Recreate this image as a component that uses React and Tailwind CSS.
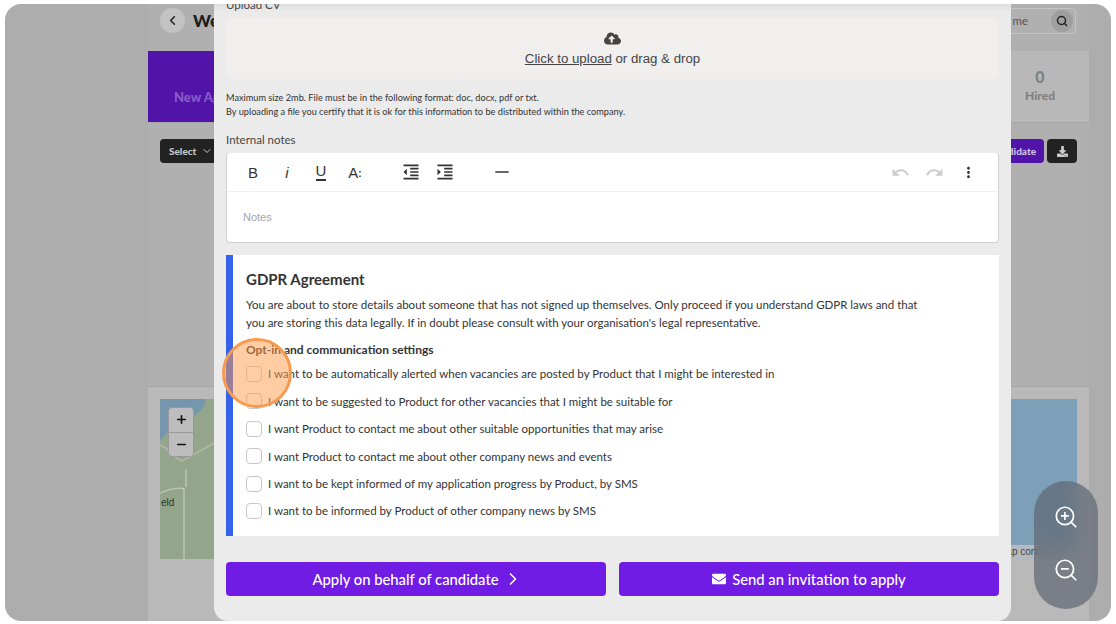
import React from "react";
import { ChevronLeft, ChevronRight, ChevronDown, Search, ZoomIn, ZoomOut, Plus, Minus } from "lucide-react";
import { MdFormatIndentDecrease, MdFormatIndentIncrease, MdHorizontalRule, MdUndo, MdRedo, MdMoreVert } from "react-icons/md";
import { FaCloudUploadAlt, FaEnvelope, FaDownload } from "react-icons/fa";

const options = [
  "I want to be automatically alerted when vacancies are posted by Product that I might be interested in",
  "I want to be suggested to Product for other vacancies that I might be suitable for",
  "I want Product to contact me about other suitable opportunities that may arise",
  "I want Product to contact me about other company news and events",
  "I want to be kept informed of my application progress by Product, by SMS",
  "I want to be informed by Product of other company news by SMS",
];

function Background() {
  return (
    <div className="h-full ml-[143px] w-[941px] bg-[#b0b0b0] flex flex-col">
      <div className="h-[47px] flex items-start justify-between pl-[12px] pr-[13px] pt-[4px]">
        <div className="flex items-center gap-[8px]">
          <div className="w-[25px] h-[25px] rounded-full bg-[#c2c2c2] flex items-center justify-center">
            <ChevronLeft size={15} strokeWidth={2.5} className="text-[#222]" />
          </div>
          <span className="text-[17px] font-black text-[#1c1c1c]">Welcome</span>
        </div>
        <div className="w-[170px] h-[26px] rounded border border-[#c4c4c4] flex items-center justify-end pr-[2px] text-[11.5px] text-[#555]">
          <span className="mr-[23px]">me</span>
          <div className="w-[22px] h-[22px] rounded-full bg-[#9f9f9f] flex items-center justify-center">
            <Search size={12} strokeWidth={3} className="text-[#222]" />
          </div>
        </div>
      </div>
      <div className="h-[72px] flex bg-[#b8b8b8] border-b border-[#a8a8a8]">
        <div className="w-[120px] bg-[#5113a8] flex items-center pl-[26px] pt-[23px]">
          <span className="text-[13px] font-black text-[#8a5cc9] whitespace-nowrap">New Applicants</span>
        </div>
        <div className="flex-1" />
        <div className="w-[98px] flex flex-col items-center justify-center pb-[2px] text-[#808080] font-black">
          <span className="text-[16px] leading-[20px]">0</span>
          <span className="text-[12px] leading-[17px]">Hired</span>
        </div>
      </div>
      <div className="h-[24px] mt-[16px] px-[12px] flex justify-between">
        <div className="h-[24px] w-[70px] rounded-sm bg-[#222] text-[#c8c8c8] text-[10px] font-black flex items-center gap-[5px] pl-[9px]">
          Select <ChevronDown size={12} />
        </div>
        <div className="flex gap-[3px]">
          <div className="h-[24px] w-[70px] rounded-sm bg-[#5113a8] text-[#d0c0e8] text-[10px] font-black flex items-center justify-end pr-[8px]">
            candidate
          </div>
          <div className="h-[24px] w-[30px] rounded-sm bg-[#222] flex items-center justify-center">
            <FaDownload size={11} className="text-[#ccc]" />
          </div>
        </div>
      </div>
      <div className="mt-[223px] flex-1 bg-[#b9b9b9] border-t border-[#a6a6a6] px-[12px] pt-[12px]">
        <div className="relative h-[160px] overflow-hidden bg-[#7d9fb7]">
          <svg className="absolute left-0 top-0" width="54" height="160" viewBox="0 0 54 160">
            <rect width="54" height="160" fill="#93a68c" />
            <path d="M0 0H46C44 14 30 20 18 24C10 28 6 36 0 42Z" fill="#7597ad" />
            <path d="M0 46C8 48 14 60 22 62L54 44" stroke="#adb6a3" strokeWidth="2" fill="none" />
            <path d="M0 94C8 90 20 88 24 90V160M26 70V88" stroke="#bcc3b2" strokeWidth="1.5" fill="none" />
          </svg>
          <div className="absolute left-[8px] top-[8px] w-[26px] h-[50px] rounded-sm bg-[#bdbdbd] border border-[#999] flex flex-col text-[#111]">
            <div className="h-[25px] flex items-center justify-center border-b border-[#999]"><Plus size={13} strokeWidth={3} /></div>
            <div className="h-[24px] flex items-center justify-center"><Minus size={13} strokeWidth={3} /></div>
          </div>
          <span className="absolute left-[1px] top-[96px] text-[10px] text-[#2f352c] font-['Liberation_Sans',sans-serif]">eld</span>
          <div className="absolute right-0 bottom-0 w-[80px] h-[14px] bg-[#b5babe] pl-[1px] text-[10px] leading-[14px] text-[#444] whitespace-nowrap overflow-hidden font-['Liberation_Sans',sans-serif]">Map contributors</div>
        </div>
      </div>
    </div>
  );
}

function ToolIcon({ children, className = "" }) {
  return <span className={`w-[34px] flex items-center justify-center ${className}`}>{children}</span>;
}

function Modal() {
  return (
    <div className="absolute left-[209px] top-0 bottom-0 w-[797px] bg-[#ebebeb] rounded-b-[14px] overflow-hidden px-[12px] text-[#333]">
      <div className="absolute inset-x-0 top-0 h-[8px] bg-gradient-to-b from-[#dfdfdf] to-[#ebebeb]" />
      <div className="relative text-[11.5px] leading-[14px] -mt-[6px] h-[20px] text-[#444]">Upload CV</div>
      <div className="h-[61px] rounded-lg bg-[#f0efee] flex flex-col items-center justify-center text-[#444] font-['Liberation_Sans',sans-serif]">
        <FaCloudUploadAlt size={17} className="text-[#444] -mt-[3px] mb-[3px] translate-y-[1px]" />
        <div className="text-[13.25px] leading-[20px] -mb-[3px]"><span className="underline">Click to upload</span> or drag &amp; drop</div>
      </div>
      <div className="mt-[12px] text-[9.2px] leading-[14px] text-[#333]">
        <div>Maximum size 2mb. File must be in the following format: doc, docx, pdf or txt.</div>
        <div>By uploading a file you certify that it is ok for this information to be distributed within the company.</div>
      </div>
      <div className="mt-[14px] text-[11.5px] leading-[14px] text-[#444]">Internal notes</div>
      <div className="mt-[6px] h-[90px] bg-white rounded-[4px] border-b border-x border-[#d0d0d0] border-t-0">
        <div className="h-[39px] flex items-center pl-[9px] pr-[13px] text-[#333] border-b border-[#f0f0f0]">
          <ToolIcon><span className="text-[15px] leading-none font-['Liberation_Sans',sans-serif]">B</span></ToolIcon>
          <ToolIcon><span className="text-[15px] leading-none italic font-['Liberation_Sans',sans-serif]">i</span></ToolIcon>
          <ToolIcon><span className="text-[15px] leading-[16px] border-b-2 border-[#333] font-['Liberation_Sans',sans-serif]">U</span></ToolIcon>
          <ToolIcon><span className="text-[15px] leading-none font-['Liberation_Sans',sans-serif]">A<span className="text-[10px] font-bold align-[1px]">:</span></span></ToolIcon>
          <span className="w-[22px]" />
          <ToolIcon><MdFormatIndentDecrease size={20} /></ToolIcon>
          <ToolIcon><MdFormatIndentIncrease size={20} /></ToolIcon>
          <span className="w-[23px]" />
          <ToolIcon><MdHorizontalRule size={20} /></ToolIcon>
          <span className="flex-1" />
          <ToolIcon className="text-[#ccc]"><MdUndo size={19} /></ToolIcon>
          <ToolIcon className="text-[#ccc]"><MdRedo size={19} /></ToolIcon>
          <ToolIcon><MdMoreVert size={17} /></ToolIcon>
        </div>
        <div className="pl-[16px] pt-[17px] text-[11px] leading-[16px] text-[#a5a5a5] font-['Liberation_Sans',sans-serif]">Notes</div>
      </div>
      <div className="mt-[12px] h-[281px] bg-white border-l-[7px] border-[#3563e9] pl-[13px] pt-[14px]">
        <div className="text-[15px] font-bold leading-[20px] text-[#333]">GDPR Agreement</div>
        <div className="mt-[7px] text-[11.5px] leading-[17.5px] w-[680px] text-[#333]">
          You are about to store details about someone that has not signed up themselves. Only proceed if you understand GDPR laws and that you are storing this data legally. If in doubt please consult with your organisation's legal representative.
        </div>
        <div className="mt-[12px] text-[12px] font-bold leading-[14px] text-[#333]">Opt-in and communication settings</div>
        <div className="mt-[9px] flex flex-col gap-[11.4px]">
          {options.map((o) => (
            <label key={o} className="flex items-center gap-[6px] h-[16px] text-[11.5px] text-[#333] whitespace-nowrap">
              <span className="w-[16px] h-[16px] rounded-[4px] bg-white border border-[#c8c8c8] shrink-0" />
              {o}
            </label>
          ))}
        </div>
      </div>
      <div className="mt-[26px] grid grid-cols-2 gap-[13px]">
        <button className="h-[34px] rounded-[4px] bg-[#701ce4] text-white text-[14.8px] font-medium flex items-center justify-center gap-[4px] pl-[3px]">
          Apply on behalf of candidate <ChevronRight size={20} strokeWidth={2} />
        </button>
        <button className="h-[34px] rounded-[4px] bg-[#701ce4] text-white text-[14.8px] font-medium flex items-center justify-center gap-[6px]">
          <FaEnvelope size={14} /> Send an invitation to apply
        </button>
      </div>
    </div>
  );
}

export default function App() {
  return (
    <div className="w-[1116px] h-[624px] bg-white pl-[5px] pr-[5px] pt-[4px] pb-[3px] font-['Lato',sans-serif]">
      <div className="relative w-full h-full rounded-[16px] overflow-hidden bg-[#adadad]">
        <Background />
        <Modal />
        <div className="absolute left-[217px] top-[334px] w-[70px] h-[70px] rounded-full border-[3px] border-[#f59a4f] bg-[#ff9a4a]/50" />
        <div className="absolute left-[1029px] top-[477px] w-[64px] h-[128px] rounded-full bg-[#5f6672]/70 backdrop-blur-sm flex flex-col items-center justify-center gap-[27px] pb-[4px] text-white">
          <ZoomIn size={26} strokeWidth={1.6} />
          <ZoomOut size={26} strokeWidth={1.6} />
        </div>
      </div>
    </div>
  );
}
